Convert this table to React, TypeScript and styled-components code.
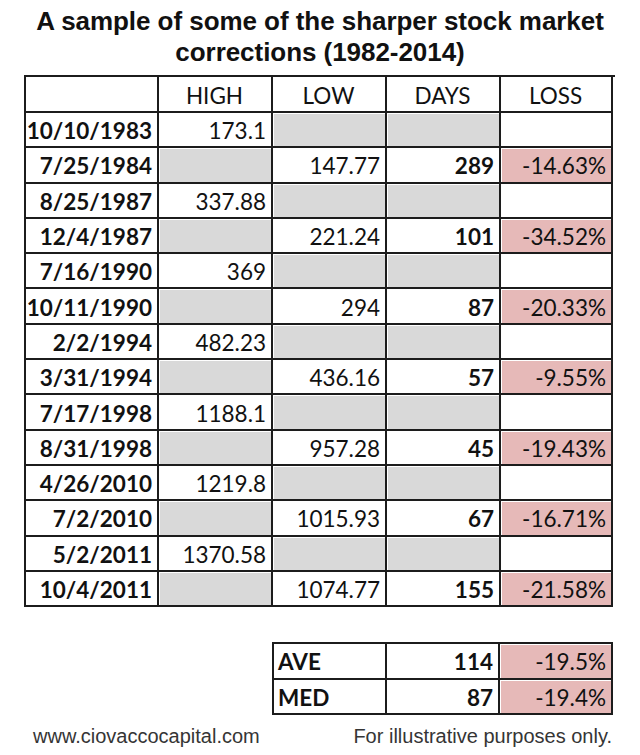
import { createGlobalStyle, styled } from "styled-components";

const GlobalStyle = createGlobalStyle`
    html, body {
        margin: 0;
        padding: 0;
        background: #fff;
    }
    body {
        width: 640px;
        height: 755px;
        overflow: hidden;
    }
`;

const Page = styled.div`
    display: flex;
    flex-direction: column;
    width: 640px;
    padding-top: 6px;
`;

const Title = styled.h1`
    margin: 0;
    font-family: "Liberation Sans", Arial, sans-serif;
    font-weight: bold;
    font-size: 26px;
    line-height: 31px;
    text-align: center;
    color: #111;
    letter-spacing: -0.05px;
`;

const Table = styled.div<{ $cols: string; $first: number; $row: number }>`
    display: grid;
    grid-template-columns: ${(p) => p.$cols};
    grid-template-rows: ${(p) => p.$first}px;
    grid-auto-rows: ${(p) => p.$row}px;
    border-top: 2px solid #1c1c1c;
    border-left: 2px solid #1c1c1c;
`;

const MainTable = styled(Table)`
    width: 589px;
    margin: 7px 0 0 24px;
`;

const SummaryWrap = styled.div`
    display: flex;
    justify-content: flex-end;
    width: 589px;
    margin: 35px 0 0 24px;
`;

const Cell = styled.div<{ $fill?: "gray" | "pink"; $align?: "left" | "center" | "right"; $bold?: boolean }>`
    box-sizing: border-box;
    display: flex;
    align-items: center;
    justify-content: ${(p) =>
        p.$align === "left" ? "flex-start" : p.$align === "center" ? "center" : "flex-end"};
    padding: 2px 5px 0 4px;
    border-right: 2px solid #1c1c1c;
    border-bottom: 2px solid #1c1c1c;
    background: ${(p) => (p.$fill === "gray" ? "#d9d9d9" : p.$fill === "pink" ? "#e6b9b8" : "#fff")};
    box-shadow: ${(p) => (p.$fill ? "inset 1px 1px 0 #fff" : "none")};
    font-family: Lato, "Open Sans", sans-serif;
    font-size: 22.5px;
    font-weight: ${(p) => (p.$bold ? 700 : 400)};
    color: #111;
    white-space: nowrap;
`;

const Footer = styled.div`
    display: flex;
    justify-content: space-between;
    align-items: baseline;
    margin-top: 10px;
    padding: 0 28px 0 33px;
    font-family: "Liberation Sans", Arial, sans-serif;
    font-size: 20px;
    color: #353535;
`;

interface Row {
    date: string;
    high?: string;
    low?: string;
    days?: string;
    loss?: string;
}

const rows: Row[] = [
    { date: "10/10/1983", high: "173.1" },
    { date: "7/25/1984", low: "147.77", days: "289", loss: "-14.63%" },
    { date: "8/25/1987", high: "337.88" },
    { date: "12/4/1987", low: "221.24", days: "101", loss: "-34.52%" },
    { date: "7/16/1990", high: "369" },
    { date: "10/11/1990", low: "294", days: "87", loss: "-20.33%" },
    { date: "2/2/1994", high: "482.23" },
    { date: "3/31/1994", low: "436.16", days: "57", loss: "-9.55%" },
    { date: "7/17/1998", high: "1188.1" },
    { date: "8/31/1998", low: "957.28", days: "45", loss: "-19.43%" },
    { date: "4/26/2010", high: "1219.8" },
    { date: "7/2/2010", low: "1015.93", days: "67", loss: "-16.71%" },
    { date: "5/2/2011", high: "1370.58" },
    { date: "10/4/2011", low: "1074.77", days: "155", loss: "-21.58%" },
];

const summary = [
    { label: "AVE", days: "114", loss: "-19.5%" },
    { label: "MED", days: "87", loss: "-19.4%" },
];

const App = () => {
    return (
        <Page>
            <GlobalStyle />
            <Title>
                A sample of some of the sharper stock market
                <br />
                corrections (1982-2014)
            </Title>

            <MainTable $cols="133px 114px 114px 114px 112px" $first={36} $row={35.3}>
                <Cell />
                <Cell $align="center">HIGH</Cell>
                <Cell $align="center">LOW</Cell>
                <Cell $align="center">DAYS</Cell>
                <Cell $align="center">LOSS</Cell>
                {rows.map((r) => {
                    const isHigh = r.high !== undefined;
                    return [
                        <Cell key={r.date + "d"} $bold>{r.date}</Cell>,
                        <Cell key={r.date + "h"} $fill={isHigh ? undefined : "gray"}>{r.high}</Cell>,
                        <Cell key={r.date + "l"} $fill={isHigh ? "gray" : undefined}>{r.low}</Cell>,
                        <Cell key={r.date + "y"} $fill={isHigh ? "gray" : undefined} $bold>{r.days}</Cell>,
                        <Cell key={r.date + "s"} $fill={isHigh ? undefined : "pink"}>{r.loss}</Cell>,
                    ];
                })}
            </MainTable>

            <SummaryWrap>
                <Table $cols="113px 113px 113px" $first={35.5} $row={35.5}>
                    {summary.map((s) => [
                        <Cell key={s.label + "a"} $align="left" $bold>{s.label}</Cell>,
                        <Cell key={s.label + "b"} $bold>{s.days}</Cell>,
                        <Cell key={s.label + "c"} $fill="pink">{s.loss}</Cell>,
                    ])}
                </Table>
            </SummaryWrap>

            <Footer>
                <span>www.ciovaccocapital.com</span>
                <span>For illustrative purposes only.</span>
            </Footer>
        </Page>
    );
};

export default App;
